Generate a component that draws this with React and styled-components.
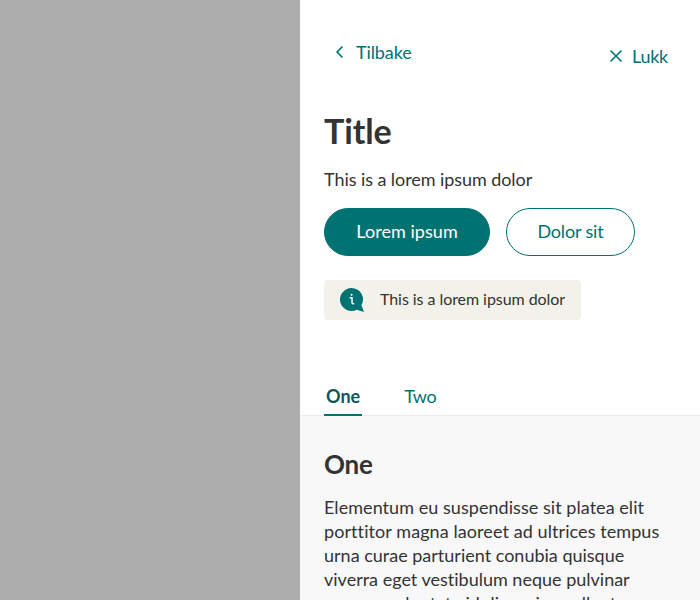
import React from "react";
import styled, { createGlobalStyle } from "styled-components";

const GlobalStyle = createGlobalStyle`
  * { box-sizing: border-box; }
  body { margin: 0; overflow: hidden; }
`;
const Backdrop = styled.div`
  display: flex;
  justify-content: flex-end;
  width: 100%;
  height: 600px;
  overflow: hidden;
  background: #adadad;
`;
const Drawer = styled.aside`
  width: 400px;
  height: 600px;
  overflow: hidden;
  background: #fff;
  color: #333;
  font: 400 18px/24px Lato, sans-serif;
  font-variant-ligatures: none;
`;
const Navigation = styled.header`
  display: flex;
  justify-content: space-between;
  align-items: flex-start;
  height: 111px;
  padding: 40px 32px 0 32px;
`;
const NavButton = styled.button`
  display: flex;
  align-items: center;
  gap: 8px;
  height: 24px;
  margin-top: ${(p) => p.$offset || 0}px;
  padding: 0;
  border: 0;
  background: none;
  color: #007272;
  font: inherit;
  svg { display: block; }
`;
const Label = styled.span`
  display: block;
  white-space: nowrap;
  padding-bottom: ${(p) => p.$lift || 0}px;
  letter-spacing: ${(p) => p.$spacing || 0}px;
`;
const Summary = styled.section`
  padding: 0 24px;
`;
const Title = styled.h1`
  margin: 0 0 16px;
  font-size: 34px;
  line-height: 40px;
  font-weight: 700;
`;
const Actions = styled.div`
  display: flex;
  gap: 16px;
  margin: 17px 0 24px;
`;
const PillButton = styled.button`
  display: flex;
  align-items: center;
  justify-content: center;
  width: ${(p) => p.$width}px;
  height: 48px;
  padding: 0;
  border: 1px solid #007272;
  border-radius: 24px;
  background: ${(p) => (p.$primary ? "#007272" : "#fff")};
  color: ${(p) => (p.$primary ? "#fff" : "#007272")};
  font: inherit;
`;
const Notice = styled.div`
  display: flex;
  align-items: center;
  gap: 16px;
  width: 257px;
  height: 40px;
  padding-left: 16px;
  border-radius: 4px;
  background: #f2f2ea;
  font-size: 16px;
`;
const Tabs = styled.nav`
  display: flex;
  gap: 40px;
  height: 40px;
  margin-top: 56px;
  padding-left: 24px;
  border-bottom: 1px solid #ebebeb;
`;
const Tab = styled.button`
  height: 40px;
  padding: 8px 2px 6px;
  border: 0;
  border-bottom: 2px solid ${(p) => (p.$selected ? "#007272" : "transparent")};
  background: none;
  color: ${(p) => (p.$selected ? "#14555a" : "#007272")};
  font: inherit;
  font-weight: ${(p) => (p.$selected ? 700 : 400)};
`;
const Content = styled.section`
  height: 184px;
  padding: 32px 24px 0;
  background: #f8f8f8;
`;
const Heading = styled.h2`
  margin: 0 0 15px;
  font-size: 26px;
  line-height: 32px;
  font-weight: 700;
`;

export default function App() {
  return (
    <>
      <GlobalStyle />
      <Backdrop>
        <Drawer>
          <Navigation>
            <NavButton>
              <svg width="16" height="16" viewBox="0 0 16 16" fill="none" stroke="currentColor" strokeWidth="1.7" strokeLinecap="round" strokeLinejoin="round"><path d="M10 3 5 8l5 5" /></svg>
              <Label $lift={1} $spacing={-0.1}>Tilbake</Label>
            </NavButton>
            <NavButton $offset={4}>
              <svg width="16" height="16" viewBox="0 0 16 16" fill="none" stroke="currentColor" strokeWidth="1.6" strokeLinecap="round"><path d="m3 3 10 10M13 3 3 13" /></svg>
              <Label $lift={1} $spacing={-0.25}>Lukk</Label>
            </NavButton>
          </Navigation>
          <Summary>
            <Title><Label $spacing={-0.1}>Title</Label></Title>
            <Label $spacing={-0.07}>This is a lorem ipsum dolor</Label>
            <Actions>
              <PillButton $primary $width={166}><Label $lift={2} $spacing={0.05}>Lorem ipsum</Label></PillButton>
              <PillButton $width={129}><Label $lift={2} $spacing={-0.15}>Dolor sit</Label></PillButton>
            </Actions>
            <Notice>
              <svg width="24" height="24" viewBox="0 0 24 24" fill="none"><path fill="#007272" d="M11.5 0a11.5 11.5 0 1 0 5.3 21.7L24 24l-2.5-6.8A11.5 11.5 0 0 0 11.5 0Z" /><path d="M9.6 9.8H12v4.8q0 1.2 1.2 1.2h1" stroke="#fff" strokeWidth="1.5" /><circle cx="11.6" cy="6.8" r="1" fill="#fff" /></svg>
              <Label $lift={2} $spacing={-0.06}>This is a lorem ipsum dolor</Label>
            </Notice>
          </Summary>
          <Tabs>
            <Tab $selected><Label>One</Label></Tab>
            <Tab><Label $spacing={-0.4}>Two</Label></Tab>
          </Tabs>
          <Content>
            <Heading><Label $spacing={-0.2}>One</Label></Heading>
            <Label $spacing={0.05}>Elementum eu suspendisse sit platea elit</Label>
            <Label $spacing={0.08}>porttitor magna laoreet ad ultrices tempus</Label>
            <Label>urna curae parturient conubia quisque</Label>
            <Label>viverra eget vestibulum neque pulvinar</Label>
            <Label>semper vulputate id dis varius pellentesque</Label>
          </Content>
        </Drawer>
      </Backdrop>
    </>
  );
}
